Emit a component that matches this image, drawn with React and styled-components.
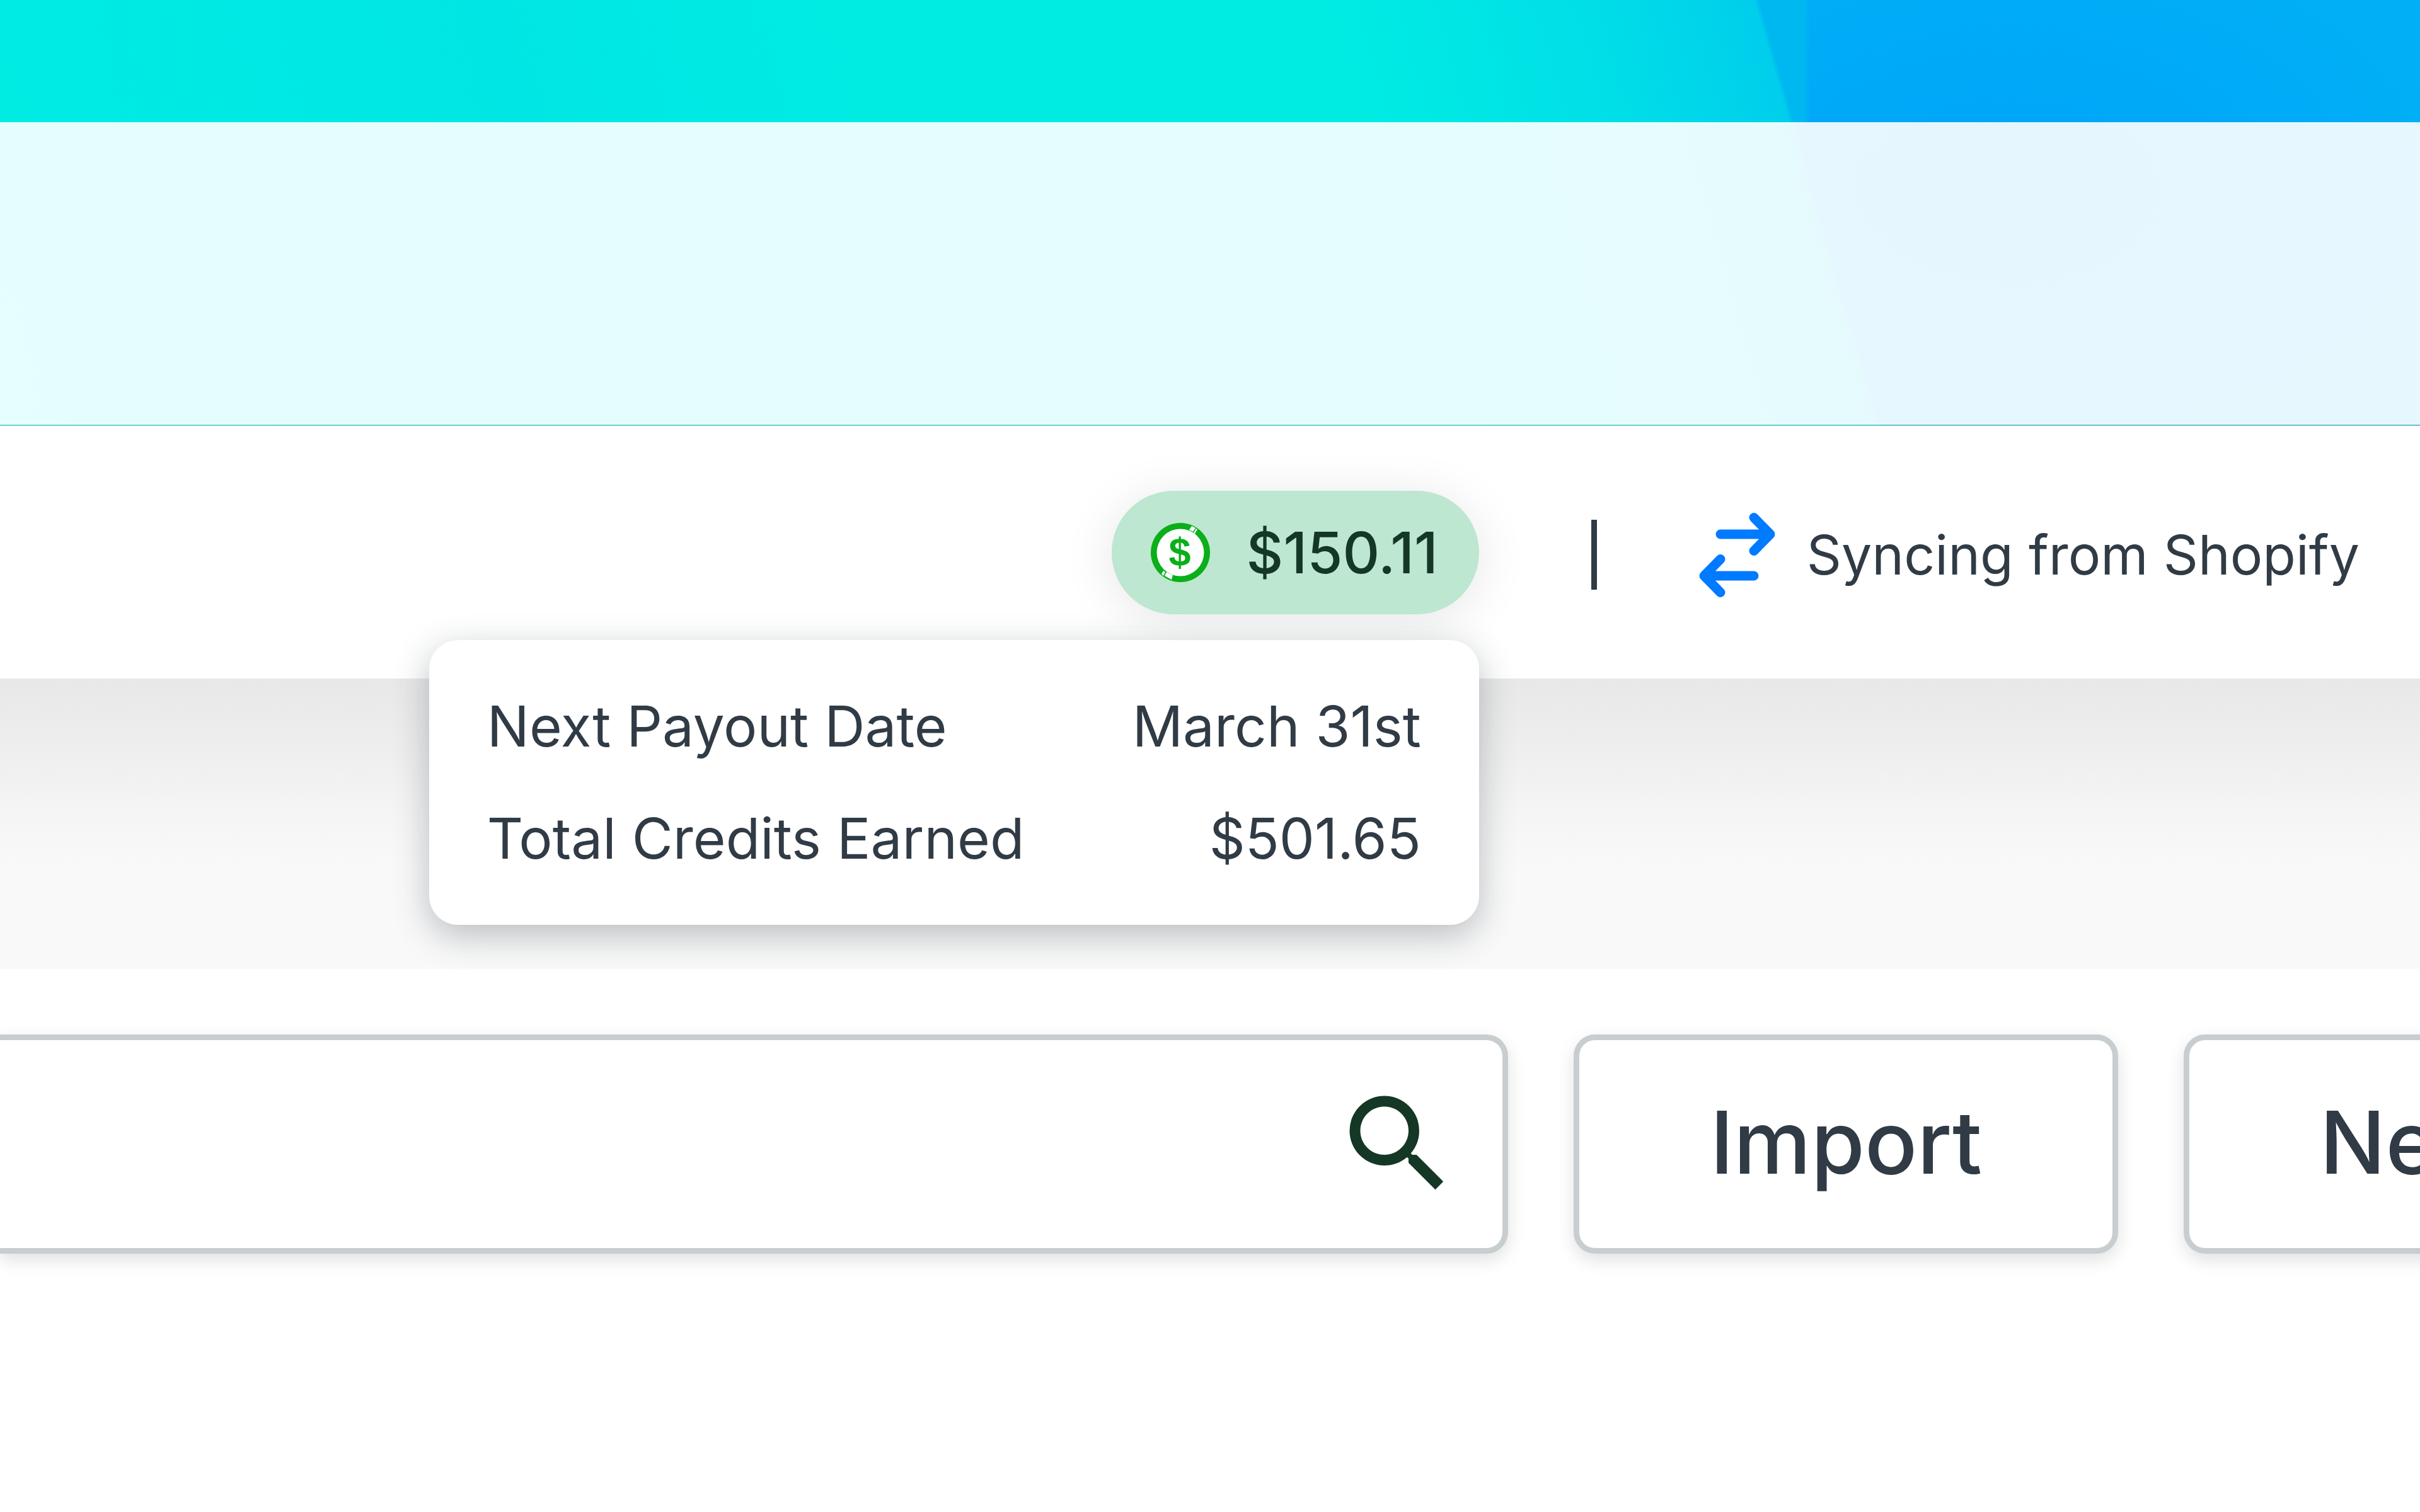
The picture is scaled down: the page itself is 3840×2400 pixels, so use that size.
import React from 'react'
import styled, { createGlobalStyle } from 'styled-components'
import { MdSearch } from 'react-icons/md'

const GlobalStyle = createGlobalStyle`
  * {
    box-sizing: border-box;
  }
  body {
    margin: 0;
    background: #ffffff;
    color: #303b45;
    font-family: Inter, "Liberation Sans", sans-serif;
  }
`

const Page = styled.div`
  min-height: 100vh;
  overflow: hidden;
`

const Hero = styled.header`
  padding-top: 194px;
  background:
    linear-gradient(74deg, #00ede3 0%, #00e6e4 24%, #00ece3 38%, #00ece3 57%, #00dfe7 67%, #00ceec 73.8%, rgba(0, 184, 240, 0) 74%),
    linear-gradient(90deg, #00b8f0 74.5%, rgba(0, 184, 240, 0) 74.8%),
    radial-gradient(ellipse 700px 420px at 83% 45%, #00a4fa 0%, #00a8f8 40%, #00aff6 100%);
`

const Wash = styled.div`
  height: 482px;
  background: rgba(255, 255, 255, 0.9);
  background-clip: padding-box;
  border-bottom: 2px solid rgba(170, 200, 190, 0.6);
`

const StatusBar = styled.section`
  display: flex;
  align-items: center;
  justify-content: flex-end;
  height: 401px;
  padding-right: 96px;
  background: #ffffff;
`

const Credits = styled.div`
  position: relative;
`

const CreditsPill = styled.button`
  display: flex;
  align-items: center;
  gap: 58px;
  height: 196px;
  padding: 0 65px 0 62px;
  border: 0;
  border-radius: 98px;
  background: #bde7d0;
  box-shadow: 0 10px 80px rgba(0, 0, 0, 0.1);
  color: #153726;
  font: inherit;
  font-size: 91px;
  font-weight: 500;
`

const CoinIcon = styled.svg`
  width: 94px;
  height: 94px;
`

const Popover = styled.dl`
  position: absolute;
  top: calc(100% + 41px);
  right: 0;
  display: grid;
  gap: 72px;
  width: 1666px;
  margin: 0;
  padding: 84px 92px;
  border-radius: 46px;
  background: #ffffff;
  box-shadow: 0 16px 56px rgba(48, 59, 69, 0.32);
`

const PopoverRow = styled.div`
  display: flex;
  justify-content: space-between;
  font-size: 89px;
  line-height: 106px;
`

const Label = styled.dt``

const Value = styled.dd`
  margin: 0;
`

const Divider = styled.div`
  width: 9px;
  height: 111px;
  margin-right: 112px;
  background: #303b45;
`

const Sync = styled.div`
  display: flex;
  align-items: center;
  gap: 50px;
  margin-left: 178px;
  padding-top: 8px;
  font-size: 86px;
`

const SyncIcon = styled.svg`
  width: 121px;
  height: 134px;
`

const Fade = styled.div`
  height: 461px;
  background: linear-gradient(180deg, #e8e8e8 0%, #eeeeee 24%, #f4f4f4 43%, #f9f9f9 65%, #f9f9f9 100%);
`

const Toolbar = styled.section`
  display: flex;
  gap: 104px;
  padding: 104px 0;
`

const SearchBox = styled.label`
  display: flex;
  flex: 1;
  align-items: center;
  min-width: 0;
  height: 348px;
  padding-right: 64px;
  border: 9px solid #c8cdd0;
  border-left: 0;
  border-radius: 0 34px 34px 0;
  box-shadow: 0 10px 28px rgba(0, 0, 0, 0.12);
  color: #153726;
`

const SearchInput = styled.input`
  flex: 1;
  min-width: 0;
  height: 100%;
  padding: 0 104px;
  border: 0;
  outline: 0;
  background: transparent;
  color: #303b45;
  font: inherit;
  font-size: 138px;
`

const ToolButton = styled.button`
  flex: none;
  height: 348px;
  padding: 0 207px 8px;
  border: 9px solid #c8cdd0;
  border-radius: 34px;
  background: #ffffff;
  box-shadow: 0 10px 28px rgba(0, 0, 0, 0.12);
  color: #303b45;
  font: inherit;
  font-size: 138px;
  font-weight: 500;
`

// the last button runs off the right edge of the toolbar
const LastTool = styled.div`
  flex: none;
  width: 375px;
`

const Coin = () => (
  <CoinIcon viewBox="0 0 94 94" aria-hidden="true">
    <circle cx="47" cy="47" r="47" fill="#0aaf19" />
    <circle cx="47" cy="47" r="37.5" fill="#ffffff" />
    <path
      d="M65 5 l6 3 l-4 6 l-6 -3z M72 9 l2 1 l-4 7 l-2 -1z M20 76 l3 2 l-3 6 l-3 -3z M25 78 l10 5 l-2 7 l-11 -6z"
      fill="#ffffff"
    />
    <text
      x="46"
      y="68"
      textAnchor="middle"
      fill="#0aaf19"
      fontFamily="Liberation Sans, sans-serif"
      fontSize="63"
      fontWeight="700"
    >
      $
    </text>
  </CoinIcon>
)

const SyncArrows = () => (
  <SyncIcon
    viewBox="0 0 121 134"
    fill="none"
    stroke="#007aff"
    strokeWidth="15"
    strokeLinecap="round"
    strokeLinejoin="round"
    aria-hidden="true"
  >
    <path d="M34 34 H113 M87 7.5 L113 34 L87 60.5" />
    <path d="M87 100 H8 M34 73.5 L8 100 L34 126.5" />
  </SyncIcon>
)

const App = () => {
  return (
    <Page>
      <GlobalStyle />
      <Hero>
        <Wash />
      </Hero>
      <StatusBar>
        <Credits>
          <CreditsPill type="button">
            <Coin />
            $150.11
          </CreditsPill>
          <Popover>
            <PopoverRow>
              <Label>Next Payout Date</Label>
              <Value>March 31st</Value>
            </PopoverRow>
            <PopoverRow>
              <Label>Total Credits Earned</Label>
              <Value>$501.65</Value>
            </PopoverRow>
          </Popover>
        </Credits>
        <Sync>
          <Divider />
          <SyncArrows />
          Syncing from Shopify
        </Sync>
      </StatusBar>
      <Fade />
      <Toolbar>
        <SearchBox>
          <SearchInput type="search" aria-label="Search" />
          <MdSearch size={204} />
        </SearchBox>
        <ToolButton type="button">Import</ToolButton>
        <LastTool>
          <ToolButton type="button">New</ToolButton>
        </LastTool>
      </Toolbar>
    </Page>
  )
}

export default App
